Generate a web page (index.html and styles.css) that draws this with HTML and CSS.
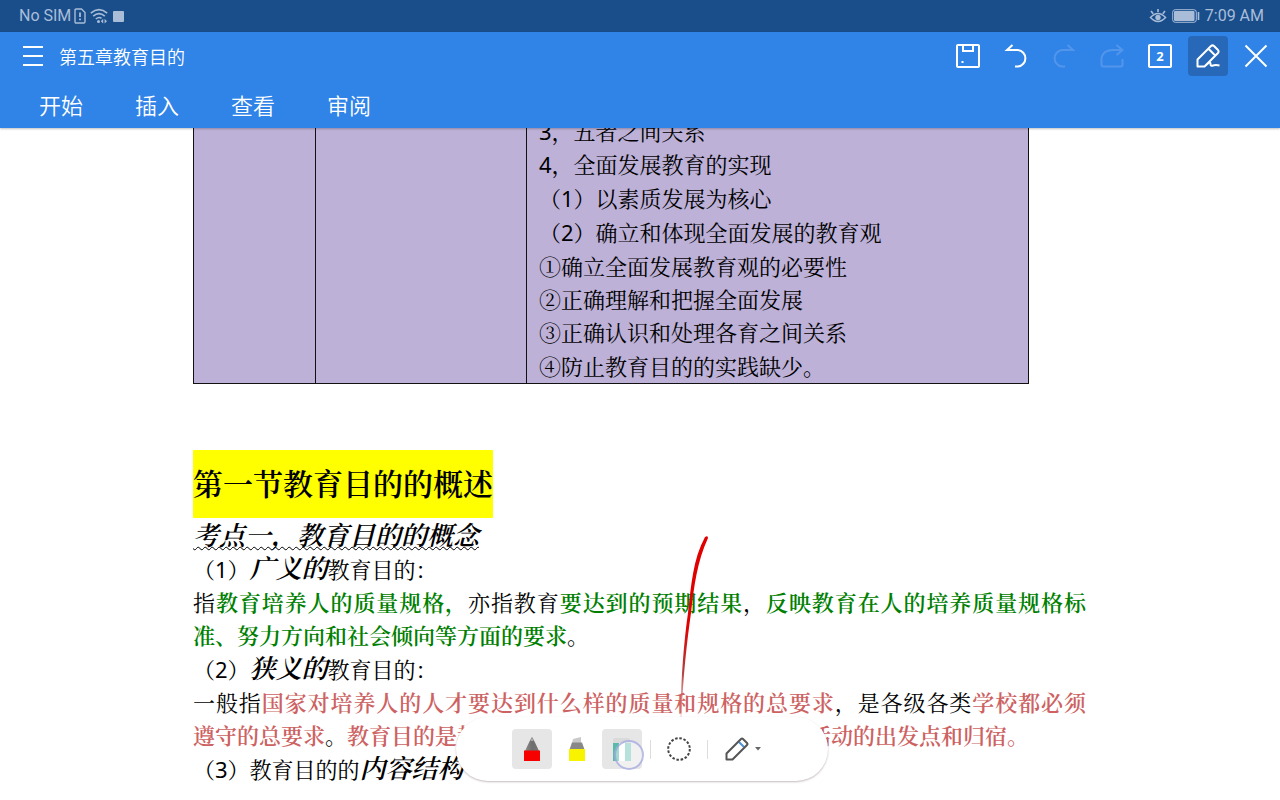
FILE: index.html
```html
<!DOCTYPE html>
<html lang="zh-CN">
<head>
<meta charset="utf-8">
<meta name="viewport" content="width=device-width, initial-scale=1">
<title>第五章教育目的</title>
<link rel="stylesheet" href="styles.css">
</head>
<body>
<div class="app">
  <div class="status">
    <div class="status-group">
      <span>No SIM</span>
      <svg class="sim" width="12" height="16" viewBox="0 0 12 16" fill="none" stroke="currentColor" stroke-width="1.4"><path d="M1 2.2Q1 1 2.2 1H7.5L11 4.5V13.8Q11 15 9.8 15H2.2Q1 15 1 13.8Z"/><path d="M6 4.5V9M6 10.5V12.3" stroke-width="1.8"/></svg>
      <svg width="18" height="16" viewBox="0 0 18 16" fill="none" stroke="currentColor" stroke-width="1.6"><path d="M.8 5.2Q9-1.8 17.2 5.2M3.2 8.2Q9 3.2 14.8 8.2M5.8 11Q9 8.4 11.5 10.4"/><circle cx="8.5" cy="13.6" r="1.5" fill="currentColor" stroke="none"/><path d="M13.2 10.8V15.6L10.8 13.2ZM14.6 10.8V15.6L17 13.2Z" fill="currentColor" stroke="none"/></svg>
      <span class="square"></span>
    </div>
    <div class="status-group">
      <svg width="18" height="16" viewBox="0 0 18 16" fill="none" stroke="currentColor" stroke-width="1.6"><path d="M1.5 9.5Q9 1.5 16.5 9.5Q9 17.5 1.5 9.5ZM9 1V4M2 3L4.2 5.8M16 3L13.8 5.8"/><circle cx="9" cy="9.5" r="2.7" fill="currentColor" stroke="none"/></svg>
      <svg width="28" height="14" viewBox="0 0 28 14" fill="none" stroke="currentColor"><rect x=".7" y=".7" width="23.6" height="12.6" rx="2.5"/><rect x="2" y="2" width="20.500" height="10" rx="1" fill="currentColor" stroke="none"/><path d="M26.5 3V11" stroke-width="1.6"/></svg>
      <span>7:09 AM</span>
    </div>
  </div>

  <header class="header">
    <div class="titlebar">
      <button class="menu" aria-label="菜单"><svg width="22" height="22" viewBox="0 0 22 22" stroke="currentColor" stroke-width="2"><path d="M1 2H21M1 11H21M1 20H21"/></svg></button>
      <h1 class="title">第五章教育目的</h1>
      <div class="actions">
        <button class="action" aria-label="保存"><svg width="24" height="24" viewBox="0 0 24 24" fill="none" stroke="currentColor" stroke-width="2"><rect x="1" y="1" width="22" height="22" rx="1"/><path d="M7 1V7H17V1"/><path d="M5.5 18H7.5"/></svg></button>
        <button class="action" aria-label="撤销"><svg width="24" height="24" viewBox="0 0 24 24" fill="none" stroke="currentColor" stroke-width="2"><path d="M8.5 1L3 6H14A8.3 8.3 0 0 1 14 22.5H11"/></svg></button>
        <button class="action" aria-label="恢复" disabled><svg width="24" height="24" viewBox="0 0 24 24" fill="none" stroke="currentColor" stroke-width="2"><path d="M15.5 1L21 6H10A8.3 8.3 0 0 0 10 22.5H13"/></svg></button>
        <button class="action" aria-label="分享" disabled><svg width="24" height="24" viewBox="0 0 24 24" fill="none" stroke="currentColor" stroke-width="2"><path d="M16.5 1L22.5 6L16.5 11M22 6H13Q3 6 1.5 14V20.5Q1.5 22.5 3.5 22.5H20.5Q22.5 22.5 22.5 20.5V15"/></svg></button>
        <button class="action" aria-label="窗口"><span class="windows">2</span></button>
        <button class="action action-on" aria-label="手写"><svg width="24" height="24" viewBox="0 0 24 24" fill="none" stroke="currentColor" stroke-width="2" stroke-linejoin="round"><path d="M1.5 22.5V15.500L15 2Q16.500 .8 18 2L22 6Q23.200 7.500 22 9L8.500 22.500ZM12.500 4.800L19.200 11.500M8.500 22.500L13 18.500Q14.500 18 14.500 20Q14.500 22.500 17 21.500T23.500 21.500"/></svg></button>
        <button class="action" aria-label="关闭"><svg width="24" height="24" viewBox="0 0 24 24" stroke="currentColor" stroke-width="2"><path d="M1.5 1.5L22.5 22.5M22.5 1.5L1.5 22.5"/></svg></button>
      </div>
    </div>
    <nav class="tabs">
      <button class="tab">开始</button>
      <button class="tab">插入</button>
      <button class="tab">查看</button>
      <button class="tab">审阅</button>
    </nav>
  </header>

  <main class="viewport">
    <article class="page">
      <table class="outline">
        <tr>
          <td class="col-a"></td>
          <td class="col-b"></td>
          <td>
            <p class="item">3，五者之间关系</p>
            <p class="item">4，全面发展教育的实现</p>
            <p class="subitem">（1）以素质发展为核心</p>
            <p class="subitem">（2）确立和体现全面发展的教育观</p>
            <p class="subitem">①确立全面发展教育观的必要性</p>
            <p class="item">②正确理解和把握全面发展</p>
            <p class="item">③正确认识和处理各育之间关系</p>
            <p class="subitem">④防止教育目的的实践缺少。</p>
          </td>
        </tr>
      </table>
      <h2 class="section"><mark>第一节教育目的的概述</mark></h2>
      <h3 class="topic">考点一，教育目的的概念</h3>
      <p class="point">（1）<em>广义的</em>教育目的：</p>
      <p class="text green line-full">指<b>教育培养人的质量规格，</b>亦指教育<b>要达到的预期结果</b>，<b>反映教育在人的培养质量规格标</b></p>
      <p class="text green"><b>准、努力方向和社会倾向等方面的要求</b>。</p>
      <p class="point">（2）<em>狭义的</em>教育目的：</p>
      <p class="text red line-full">一般指<b>国家对培养人的人才要达到什么样的质量和规格的总要求</b>，是各级各类<b>学校都必须</b></p>
      <p class="text red"><b>遵守的总要求</b>。<b>教育目的是教育工作的核心，它也是一切教育的活动的出发点和归宿。</b></p>
      <p class="point">（3）教育目的的<em>内容结构</em></p>
    </article>

    <svg class="ink" width="32" height="184" viewBox="0 0 32 184"><defs><linearGradient id="ink" x1="0" y1="0" x2="0" y2="1"><stop offset="0" stop-color="#e00000"/><stop offset=".5" stop-color="#e00000"/><stop offset=".75" stop-color="#b04040"/><stop offset="1" stop-color="#f08080" stop-opacity=".4"/></linearGradient></defs><path d="M25 1Q28 -1 28 2C17 26 14 50 11 77C7 105 3 140 1.5 181L.5 181C1 140 4 105 8 77C11 50 13 23 25 1Z" fill="url(#ink)"/></svg>

    <div class="pens" role="toolbar" aria-label="画笔">
      <button class="pen pen-on" aria-label="红色钢笔"><svg width="16" height="24" viewBox="0 0 16 24"><defs><linearGradient id="nib"><stop offset="0" stop-color="#8c8c8c"/><stop offset=".5" stop-color="#6e6e6e"/><stop offset="1" stop-color="#777"/></linearGradient></defs><path d="M8 0Q10 3 15 14H1Q6 3 8 0Z" fill="url(#nib)"/><path d="M8 0L9.5 4H6.5Z" fill="#aaa"/><path d="M0 13.5H16V24H0Z" fill="#f70000"/></svg></button>
      <button class="pen" aria-label="黄色荧光笔"><svg width="16" height="24" viewBox="0 0 16 24"><path d="M4 2L12 0V6H3Z" fill="#c9c9c9"/><path d="M3 5.5H13L15.5 12.5H.5Z" fill="#888"/><path d="M0 12H16V24H0Z" fill="#f8f400"/></svg></button>
      <button class="pen pen-on" aria-label="橡皮擦"><svg width="20" height="24" viewBox="0 0 20 24"><path d="M1 6V3Q1 1 3 1H16Q18 1 18 3V6Z" fill="#dadada"/><path d="M1 6H19V24H1Z" fill="#fff"/><path d="M1 6H7V24H1Z" fill="#58bba9"/><path d="M13 6H19V24H13Z" fill="#7ccabd"/></svg><span class="touch"></span></button>
      <span class="rule"></span>
      <button class="pen" aria-label="套索"><svg width="24" height="24" viewBox="0 0 24 24" fill="none" stroke="#444" stroke-width="2"><circle cx="12" cy="12" r="10.8" stroke-dasharray="2.5 1.741"/></svg></button>
      <span class="rule"></span>
      <button class="pen pen-more" aria-label="更多画笔"><svg width="24" height="24" viewBox="0 0 24 24" fill="none" stroke="#555" stroke-width="2" stroke-linejoin="round"><path d="M14 5L19 10" stroke="#4a90d9"/><path d="M1.5 22.5V16.5L16 2Q17 1 18 2L22 6Q23 7 22 8L7.5 22.5Z"/></svg><svg width="6" height="4" viewBox="0 0 6 4"><path d="M0 0H6L3 3.5Z" fill="#666"/></svg></button>
    </div>
  </main>
</div>
</body>
</html>
```
FILE: styles.css
```css
* { box-sizing: border-box; }

body {
  margin: 0;
  background: #fff;
  color: #000;
  font-family: "Noto Sans", "Noto Sans CJK SC", sans-serif;
}

h1, h2, h3, p { margin: 0; }

button {
  padding: 0;
  border: 0;
  background: none;
  color: inherit;
  font: inherit;
}

svg { display: block; flex: none; }

.app {
  display: flex;
  flex-direction: column;
  height: 100vh;
  overflow: hidden;
}

.status {
  display: flex;
  flex: none;
  align-items: center;
  justify-content: space-between;
  height: 32px;
  padding: 0 16px 0 19px;
  background: #194e8b;
  color: #a9bdd8;
  font: 16px/32px Roboto, sans-serif;
}

.status-group { display: flex; align-items: center; gap: 5px; }
.sim { margin: 0 -1px 0 -2px; }
.square { width: 11px; height: 11px; border-radius: 1px; background: currentColor; }

.header {
  z-index: 1;
  flex: none;
  background: #3083e7;
  box-shadow: 0 1px 2px rgba(0, 0, 0, 0.25);
  color: #fff;
  font-family: "Noto Sans CJK SC", sans-serif;
}

.titlebar { display: flex; align-items: center; height: 48px; padding: 0 4px 0 22px; }
.menu { margin-right: 15px; }
.title { font-size: 18px; line-height: 24px; font-weight: 350; }
.actions { display: flex; gap: 8px; margin-left: auto; }

.action {
  display: flex;
  align-items: center;
  justify-content: center;
  width: 40px;
  height: 40px;
  border-radius: 4px;
}

.action:disabled { color: #5296eb; }
.action-on { background: #2868b8; }

.windows {
  width: 24px;
  height: 24px;
  border: 2px solid currentColor;
  border-radius: 2px;
  font: bold 13px/20px "Open Sans", sans-serif;
}

.tabs { display: flex; gap: 52px; height: 48px; padding-left: 39px; }
.tab { font-size: 22px; line-height: 48px; font-weight: 350; }

.viewport { position: relative; flex: 1; min-height: 0; overflow: hidden; }

.page {
  margin-top: -14px;
  padding: 0 194px 0 193px;
  font-family: "Noto Sans", "Noto Serif CJK SC", "Noto Sans CJK SC", serif;
  font-size: 22px;
  font-weight: 400;
}

.outline {
  width: 836px;
  max-width: 100%;
  margin-bottom: 66px;
  border-collapse: collapse;
  background: #bdb1d7;
}

.outline td { padding: 0 12px; border: 1px solid #111; }
.outline .col-a { width: 122px; }
.outline .col-b { width: 211px; }

.item, .text { line-height: 33px; }
.subitem, .point { line-height: 34px; white-space: nowrap; }

.section { font-size: 30px; line-height: 68px; font-weight: 600; }
.section mark { display: inline-block; background: #ff0; color: inherit; }

.topic {
  font-size: 26px;
  line-height: 34px;
  font-style: italic;
  font-weight: 600;
  text-decoration: underline wavy 1px;
  text-underline-offset: 1px;
}

.point em { font-size: 26px; line-height: 1; font-weight: 600; }
.text b { font-weight: 600; }
.line-full { text-align: justify; text-align-last: justify; }
.green b { color: #008000; }
.red b { color: #cd6262; }

.ink { position: absolute; top: 408px; left: 680px; }

.pens {
  position: absolute;
  bottom: 19px;
  left: calc(50% + 2px);
  display: flex;
  align-items: center;
  gap: 5px;
  width: 372px;
  height: 64px;
  padding-left: 56px;
  border-radius: 32px;
  background: #fff;
  box-shadow: 0 1px 2px rgba(60, 30, 40, 0.3);
  transform: translateX(-50%);
}

.pen {
  position: relative;
  display: flex;
  align-items: center;
  justify-content: center;
  width: 40px;
  height: 40px;
  border-radius: 4px;
}

.pen-on { background: #e6e6e6; }
.pen-more { gap: 6px; width: 54px; }
.rule { width: 1px; height: 19px; margin: 0 3px; background: #ddd; }

.touch {
  position: absolute;
  top: 11px;
  left: 12px;
  width: 30px;
  height: 30px;
  border: 2px solid rgba(140, 145, 215, 0.6);
  border-radius: 50%;
  background: rgba(255, 255, 255, 0.45);
}
```
